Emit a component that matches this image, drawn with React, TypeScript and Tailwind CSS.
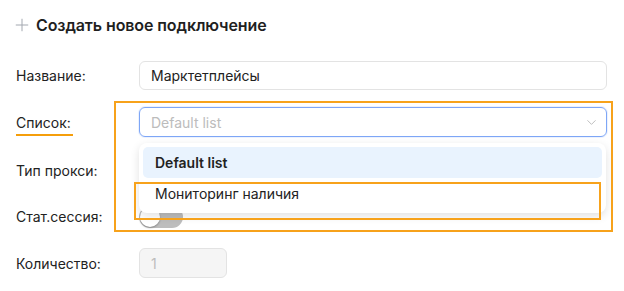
import React from "react";
import { ChevronDown, Plus } from "lucide-react";

const Label: React.FC<{ text: string; marked?: boolean }> = ({ text, marked }) => (
  <div className="w-[123px] shrink-0 text-[14px] text-[#222]">
    <span className="relative">
      {text}
      {marked && <span className="absolute left-0 right-[-2px] top-[20px] h-[2px] bg-[#f59e0b]" />}
    </span>
  </div>
);

export default function App() {
  return (
    <div className="h-[291px] w-[624px] overflow-hidden bg-white pl-[16px] pr-[17px] font-['Inter',sans-serif]">
      {/* Header */}
      <div className="flex h-[48px] items-center gap-[4px] pt-[2px]">
        <Plus className="ml-[-4px] h-[20px] w-[20px] text-[#a3a8b0]" strokeWidth={1.2} />
        <h1 className="text-[16px] font-semibold tracking-[-0.1px] text-[#1f1f1f]">Создать новое подключение</h1>
      </div>

      <div className="flex flex-col">
        {/* Название */}
        <div className="mt-[13px] flex h-[29px] items-center">
          <Label text="Название:" />
          <div className="flex h-full flex-1 items-center rounded-[6px] border border-[#e3e3e3] px-[11px] text-[14px] text-[#222]">
            Марктетплейсы
          </div>
        </div>

        {/* Список */}
        <div className="relative mt-[17px] flex h-[30px] items-center">
          <Label text="Список:" marked />
          <div className="relative h-full flex-1">
            <div className="flex h-full items-center justify-between rounded-[6px] border border-[#7ea6f6] pl-[11px] pr-[7px] text-[14px] text-[#bcbcbc] shadow-[0_0_0_1px_rgba(126,166,246,0.15)]">
              <span>Default list</span>
              <ChevronDown className="h-[15px] w-[15px] text-[#b5b5b5]" strokeWidth={1.4} />
            </div>
            {/* Dropdown */}
            <div className="absolute left-0 right-[1px] top-[36px] z-20 flex flex-col rounded-[8px] bg-white p-[4px] pb-[4px] shadow-[0_3px_10px_rgba(0,0,0,0.12)]">
              <div className="flex h-[31px] items-center rounded-[5px] bg-[#e9f3fe] px-[12px] text-[14px] font-semibold text-[#222]">
                Default list
              </div>
              <div className="flex h-[31px] items-center px-[12px] text-[14px] text-[#222]">Мониторинг наличия</div>
            </div>
            {/* Annotation boxes */}
            <div className="pointer-events-none absolute left-[-25px] right-[-6px] top-[-6px] z-30 h-[131px] border-[2px] border-[#f7a21b]" />
            <div className="pointer-events-none absolute left-[-5px] right-[6px] top-[75px] z-30 h-[38px] border-[2px] border-[#f7a21b]" />
          </div>
        </div>

        {/* Тип прокси */}
        <div className="mt-[18px] flex h-[30px] items-center">
          <Label text="Тип прокси:" />
          <div className="h-full flex-1" />
        </div>

        {/* Стат.сессия */}
        <div className="mt-[16px] flex h-[30px] items-center">
          <Label text="Стат.сессия:" />
          <div className="relative mt-[2px] h-[22px] w-[44px] rounded-full bg-[#bdbdbd]">
            <div className="absolute left-[1px] top-[1px] h-[20px] w-[20px] rounded-full bg-white shadow-[0_1px_2px_rgba(0,0,0,0.3)]" />
          </div>
        </div>

        {/* Количество */}
        <div className="mt-[17px] flex h-[30px] items-center">
          <Label text="Количество:" />
          <div className="flex h-full w-[88px] items-center rounded-[6px] border border-[#e3e3e3] bg-[#f5f5f5] px-[11px] text-[14px] text-[#bdbdbd]">
            1
          </div>
        </div>
      </div>
    </div>
  );
}
